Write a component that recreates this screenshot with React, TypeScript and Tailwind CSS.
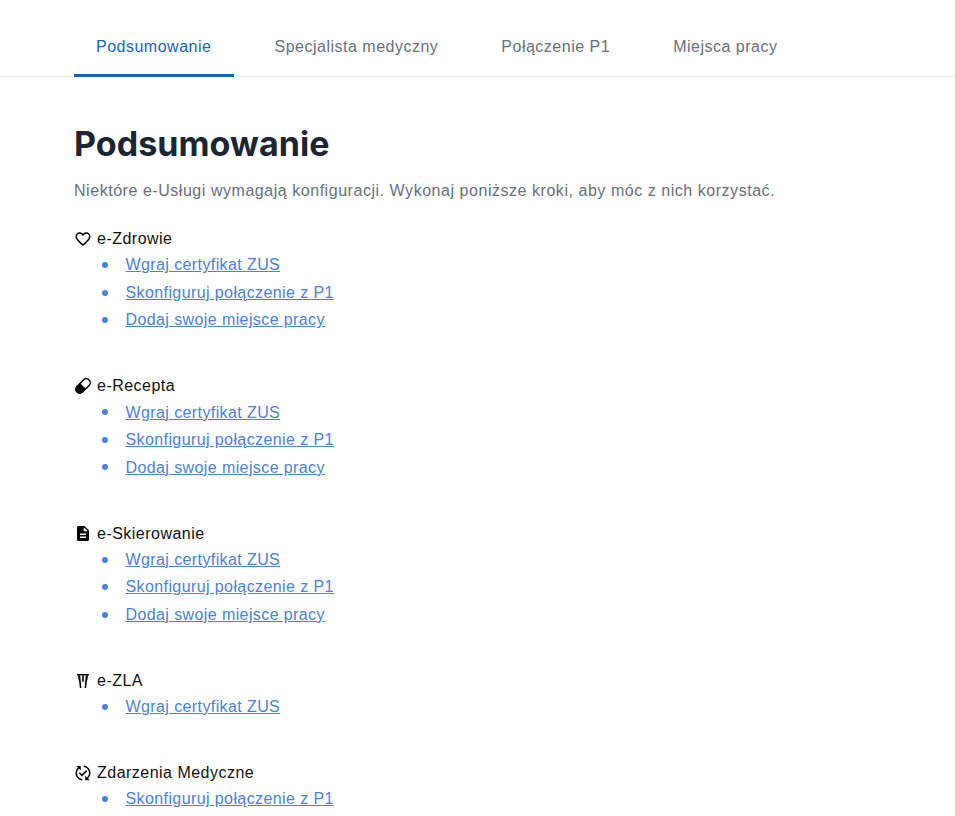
import { MdFavoriteBorder, MdDescription, MdPublishedWithChanges } from "react-icons/md";

const C = "Wgraj certyfikat ZUS";
const P = "Skonfiguruj połączenie z P1";
const M = "Dodaj swoje miejsce pracy";

function Pill() {
  return (
    <svg viewBox="0 0 16 16" width="16" height="16" className="block">
      <g transform="rotate(-45 8 8)">
        <rect x="-0.6" y="4" width="17.2" height="8" rx="4" fill="#fff" stroke="#000" strokeWidth="1.4" />
        <path d="M8 4H3.4a4 4 0 0 0 0 8H8z" fill="#000" />
      </g>
    </svg>
  );
}

function Zla() {
  return (
    <svg viewBox="0 0 16 16" width="16" height="16" className="block">
      <path d="M2 1h12v1.4H2z" fill="#000" />
      <path d="M3 2.2h2.2l1.2 12.8H4.9L4.1 8.4C3.5 6.6 3.1 4.5 3 2.2z" fill="#000" />
      <path d="M13 2.2h-2.2L9.6 15h1.5l.8-6.6c.6-1.8 1-3.9 1.1-6.2z" fill="#000" />
      <path d="M7.2 2.2h1.6v6.5H7.2z" fill="#000" />
    </svg>
  );
}

const sections = [
  { icon: <MdFavoriteBorder size={20} color="#000" />, name: "e-Zdrowie", links: [C, P, M], mb: "mb-[40.5px]" },
  { icon: <Pill />, name: "e-Recepta", links: [C, P, M], mb: "mb-[40.5px]" },
  { icon: <MdDescription size={19} color="#000" />, name: "e-Skierowanie", links: [C, P, M], mb: "mb-[40.5px]" },
  { icon: <Zla />, name: "e-ZLA", links: [C], mb: "mb-[40.5px]" },
  { icon: <MdPublishedWithChanges size={20} color="#000" />, name: "Zdarzenia Medyczne", links: [P], mb: "" },
];

const tabs = ["Podsumowanie", "Specjalista medyczny", "Połączenie P1", "Miejsca pracy"];

export default function App() {
  return (
    <div className="h-[816px] overflow-hidden bg-white font-['Liberation_Sans',sans-serif] text-base">
      <nav className="flex h-[77px] border-b border-[#e9ecef] pl-[74px] tracking-[0.5px]">
        {tabs.map((t, i) => (
          <a
            key={t}
            className={
              i === 0
                ? "mr-[18.5px] flex h-[77px] w-[160px] items-center border-b-[3px] border-[#1464cc] pl-[22px] pt-[19px] text-[#1464cc]"
                : "mr-[19px] flex h-[77px] items-center border-b-[3px] border-transparent px-[22px] pt-[19px] text-[#68717d]"
            }
          >
            {t}
          </a>
        ))}
      </nav>
      <main className="pl-[74px] pt-[45px]">
        <h1 className="font-['Inter',sans-serif] text-[34px] leading-[44px] font-bold tracking-[0.05px] text-[#1b2533]">Podsumowanie</h1>
        <p className="mt-[13px] leading-[24px] tracking-[0.54px] text-[#68717d]">
          Niektóre e-Usługi wymagają konfiguracji. Wykonaj poniższe kroki, aby móc z nich korzystać.
        </p>
        <div className="mt-[24px]">
          {sections.map((s) => (
            <section key={s.name} className={s.mb}>
              <div className="flex h-[24px] items-center tracking-[0.48px] text-[#111]">
                <span className="flex w-[18px] items-center justify-center">{s.icon}</span>
                <span className="ml-[5px]">{s.name}</span>
              </div>
              <ul className="mt-[0.25px] list-none pl-[28px] tracking-[0.4px] text-[#4a82e0]">
                {s.links.map((l) => (
                  <li key={l} className="flex h-[27.5px] items-center leading-[27.5px]">
                    <span className="h-[6px] w-[6px] rounded-full bg-[#4a82e0]" />
                    <a className="ml-[17.5px] underline">{l}</a>
                  </li>
                ))}
              </ul>
            </section>
          ))}
        </div>
      </main>
    </div>
  );
}
